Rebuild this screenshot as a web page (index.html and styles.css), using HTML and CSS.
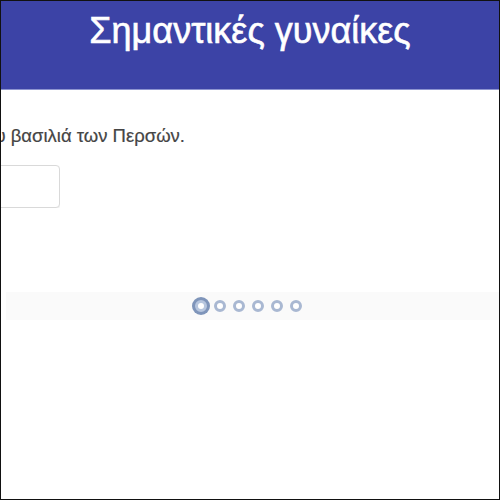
FILE: index.html
```html
<!DOCTYPE html>
<html lang="el">
<head>
<meta charset="utf-8">
<title>Σημαντικές γυναίκες</title>
<link rel="stylesheet" href="styles.css">
</head>
<body>
<div class="frame">
  <header class="header">
    <h1 class="title">Σημαντικές γυναίκες</h1>
  </header>
  <main class="content">
    <div class="slide-line">
      <p class="slide-text">Η Εσθήρ έγινε σύζυγος του βασιλιά των Περσών.</p>
    </div>
    <div class="field-row">
      <div class="field"></div>
    </div>
    <div class="pager">
      <span class="dot active"></span>
      <span class="dot"></span>
      <span class="dot"></span>
      <span class="dot"></span>
      <span class="dot"></span>
      <span class="dot"></span>
    </div>
  </main>
</div>
</body>
</html>
```

FILE: styles.css
```css
html, body {
  margin: 0;
  padding: 0;
  background: #ffffff;
}

.frame {
  width: 500px;
  height: 500px;
  box-sizing: border-box;
  border: 1px solid #111111;
  overflow: hidden;
  background: #ffffff;
  font-family: "Liberation Sans", Arial, sans-serif;
}

.header {
  background: #3c43a6;
  border-bottom: 1px solid #8d94d0;
  padding-top: 10px;
  height: 78px;
}

.title {
  margin: 0;
  color: #ffffff;
  font-size: 36px;
  font-weight: normal;
  line-height: 40px;
  text-align: center;
  -webkit-text-stroke: 0.6px #ffffff;
}

.content {
  display: flex;
  flex-direction: column;
}

.slide-line {
  margin-top: 35px;
  width: 184px;
  display: flex;
  justify-content: flex-end;
  overflow: hidden;
}

.slide-text {
  margin: 0;
  flex: none;
  white-space: nowrap;
  font-size: 18.5px;
  line-height: 22px;
  color: #454545;
  -webkit-text-stroke: 0.2px #454545;
}

.field-row {
  margin-top: 18px;
  width: 59px;
  display: flex;
  justify-content: flex-end;
  overflow: hidden;
}

.field {
  flex: none;
  width: 200px;
  height: 41px;
  border: 1px solid #d9d9d9;
  border-radius: 4px;
  background: #ffffff;
  box-shadow: 0 1px 2px rgba(0, 0, 0, 0.08);
}

.pager {
  margin-top: 84px;
  margin-left: 5px;
  height: 28px;
  background: #fafafa;
  display: flex;
  align-items: center;
  justify-content: center;
  gap: 7px;
  padding-right: 8px;
}

.dot {
  width: 12px;
  height: 12px;
  box-sizing: border-box;
  border: 3px solid #a9b8d2;
  border-radius: 50%;
  background: #ffffff;
}

.dot.active {
  border-color: #b7c6de;
  box-shadow: 0 0 0 3px #7f95ba;
}
```
